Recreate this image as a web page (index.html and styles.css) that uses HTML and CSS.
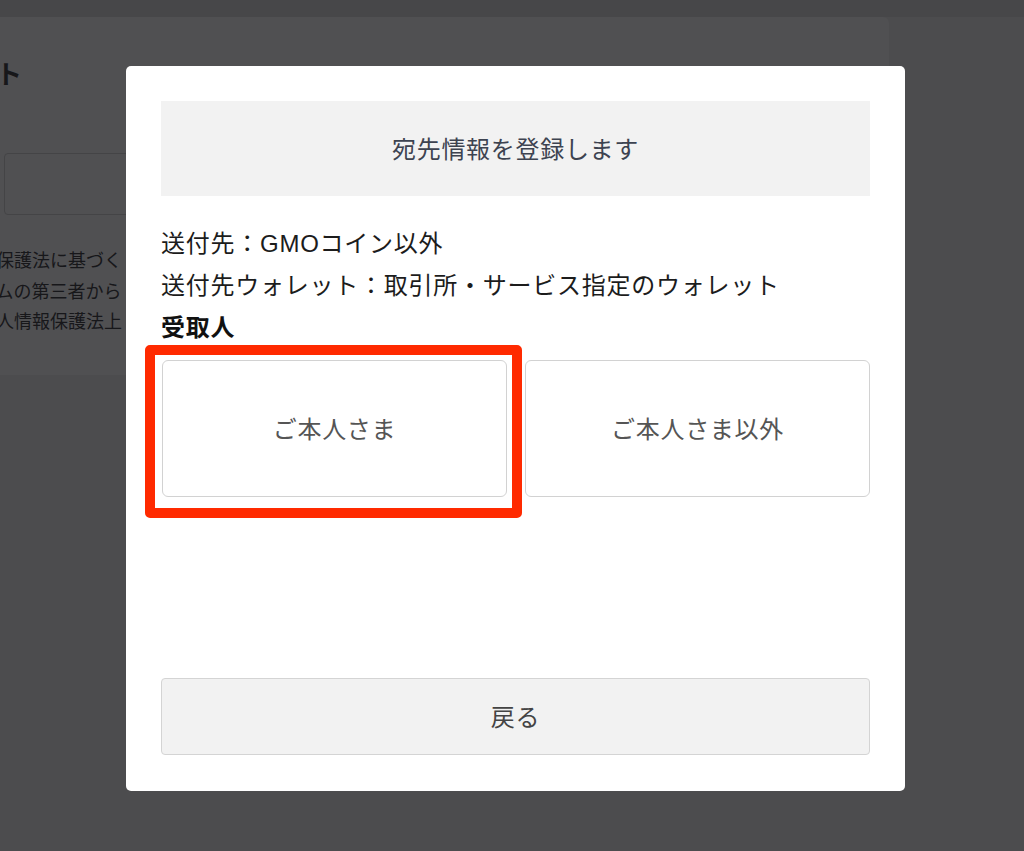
FILE: index.html
```html
<!DOCTYPE html>
<html lang="ja">
<head>
<meta charset="utf-8">
<title>宛先情報を登録します</title>
<link rel="stylesheet" href="styles.css">
</head>
<body>
<div class="page">
  <div class="topbar"></div>
  <div class="card">
    <div class="card-title">ット</div>
    <div class="card-input"></div>
    <div class="card-text">
      <div class="card-line">情報保護法に基づく</div>
      <div class="card-line">ステムの第三者から</div>
      <div class="card-line">る個人情報保護法上</div>
    </div>
  </div>
</div>

<div class="modal">
  <div class="modal-head">宛先情報を登録します</div>
  <div class="info">
    <div class="info-line">送付先：GMOコイン以外</div>
    <div class="info-line">送付先ウォレット：取引所・サービス指定のウォレット</div>
    <div class="info-line info-strong">受取人</div>
  </div>
  <div class="choices">
    <div class="choice-wrap">
      <button class="choice">ご本人さま</button>
      <span class="highlight"></span>
    </div>
    <div class="choice-wrap">
      <button class="choice">ご本人さま以外</button>
    </div>
  </div>
  <button class="back">戻る</button>
</div>
</body>
</html>
```

FILE: styles.css
```css
html, body {
  margin: 0;
  padding: 0;
}

body {
  width: 1024px;
  height: 851px;
  overflow: hidden;
  background: #4c4c4e;
  font-family: "Liberation Sans", "Noto Sans CJK JP", sans-serif;
}

.page {
  display: flex;
  flex-direction: column;
}

.topbar {
  height: 17px;
  background: #474749;
}

.card {
  width: 929px;
  height: 358px;
  margin-left: -40px;
  background: #505052;
  border-radius: 0 6px 6px 0;
  box-sizing: border-box;
  padding-top: 41px;
  color: #17171a;
}

.card-title {
  font-size: 26px;
  font-weight: 700;
  line-height: 34px;
  margin-left: 10px;
}

.card-input {
  margin-top: 61px;
  margin-left: 44px;
  height: 62px;
  border: 1px solid #444446;
  border-radius: 4px;
  box-sizing: border-box;
}

.card-text {
  margin-top: 31px;
  font-size: 18px;
  line-height: 30.5px;
}

.modal {
  position: absolute;
  left: 126px;
  top: 66px;
  width: 779px;
  height: 725px;
  box-sizing: border-box;
  padding: 35px 35px 36px;
  background: #ffffff;
  border-radius: 5px;
  display: flex;
  flex-direction: column;
}

.modal-head {
  height: 95px;
  background: #f2f2f2;
  color: #3d4350;
  font-size: 24px;
  letter-spacing: 0.7px;
  display: flex;
  align-items: center;
  justify-content: center;
  padding-bottom: 3px;
  box-sizing: border-box;
}

.info {
  margin-top: 27px;
  color: #1c1c1c;
  font-size: 24px;
  letter-spacing: 0.75px;
  line-height: 42px;
}

.info-strong {
  font-weight: 700;
  color: #111;
}

.choices {
  margin-top: 11px;
  display: flex;
  gap: 18px;
  padding-left: 1px;
}

.choice-wrap {
  position: relative;
  flex: 1;
  display: flex;
}

.choice {
  flex: 1;
  height: 137px;
  background: #fff;
  border: 1.5px solid #d2d2d2;
  border-radius: 6px;
  color: #555;
  font-family: inherit;
  font-size: 24px;
  letter-spacing: 0.7px;
  padding: 0 0 2px;
}

.highlight {
  position: absolute;
  left: -17px;
  top: -15px;
  right: -15px;
  bottom: -21px;
  border: 10px solid #ff2a00;
  border-radius: 5px;
  pointer-events: none;
}

.back {
  margin-top: auto;
  height: 77px;
  background: #f2f2f2;
  border: 1.5px solid #d4d4d4;
  border-radius: 4px;
  color: #444;
  font-family: inherit;
  font-size: 24px;
  letter-spacing: 0.7px;
  padding: 0 0 2px;
}
```
